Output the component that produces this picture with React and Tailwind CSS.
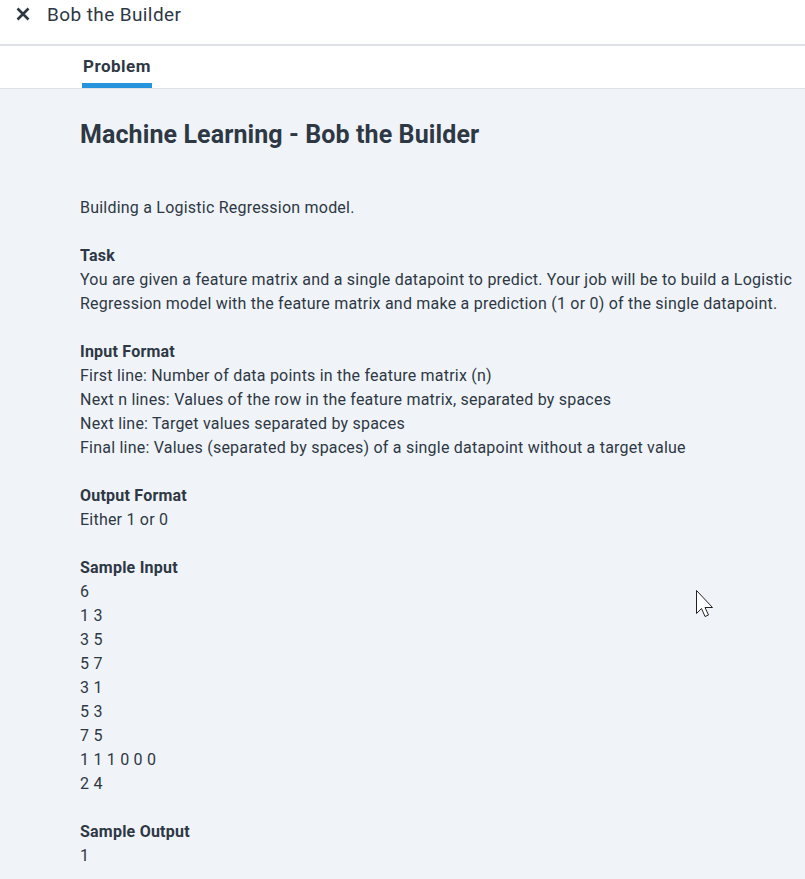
import React from "react";

function Block({ title, lines }) {
  return (
    <div className="mt-6">
      <div className="font-bold">{title}</div>
      {lines.map((l, i) => (
        <div key={i}>{l}</div>
      ))}
    </div>
  );
}

export default function App() {
  return (
    <div className="relative w-[805px] h-[879px] overflow-hidden bg-[#f0f4f8] text-[#2e3844] font-[Roboto,'Noto_Sans',sans-serif]">
      <div className="h-[46px] bg-white border-b-2 border-[#dee2e6] flex items-start">
        <div className="flex items-center h-[28px] pl-[15px]">
          <svg width="16" height="16" viewBox="0 0 16 16" className="mr-[16px]">
            <path d="M2.5 2.5 L13.5 13.5 M13.5 2.5 L2.5 13.5" stroke="#2e3844" strokeWidth="2.6" strokeLinecap="butt" />
          </svg>
          <span className="text-[19px] leading-none tracking-[0.4px]">Bob the Builder</span>
        </div>
      </div>
      <div className="h-[43px] bg-white border-b border-[#dde2e7] pl-[82px] flex items-end">
        <div className="flex flex-col items-start">
          <span className="text-[17px] font-bold pb-[7px] pl-[1px] leading-[20px] tracking-[0.5px]">Problem</span>
          <div className="h-[5px] w-[70px] bg-[#2594dc]" />
        </div>
      </div>
      <div className="pl-[80px] pt-[30px] text-[16px] leading-[24px] tracking-[0.22px]">
        <h1 className="text-[25px] font-bold leading-[32px] tracking-[0.1px]">Machine Learning - Bob the Builder</h1>
        <div className="mt-[45px]">Building a Logistic Regression model.</div>
        <Block
          title="Task"
          lines={[
            "You are given a feature matrix and a single datapoint to predict. Your job will be to build a Logistic",
            "Regression model with the feature matrix and make a prediction (1 or 0) of the single datapoint.",
          ]}
        />
        <Block
          title="Input Format"
          lines={[
            "First line: Number of data points in the feature matrix (n)",
            "Next n lines: Values of the row in the feature matrix, separated by spaces",
            "Next line: Target values separated by spaces",
            "Final line: Values (separated by spaces) of a single datapoint without a target value",
          ]}
        />
        <Block title="Output Format" lines={["Either 1 or 0"]} />
        <Block
          title="Sample Input"
          lines={["6", "1 3", "3 5", "5 7", "3 1", "5 3", "7 5", "1 1 1 0 0 0", "2 4"]}
        />
        <Block title="Sample Output" lines={["1"]} />
      </div>
      <svg className="absolute left-[696px] top-[590px]" width="20" height="28" viewBox="0 0 20 28">
        <path d="M0.5 0.5 L0.5 23.5 L5.5 18.5 L9 26.5 L12.5 25 L9 17.5 L16.5 17.5 Z" fill="white" stroke="#222" strokeWidth="1" strokeLinejoin="round" />
      </svg>
    </div>
  );
}
